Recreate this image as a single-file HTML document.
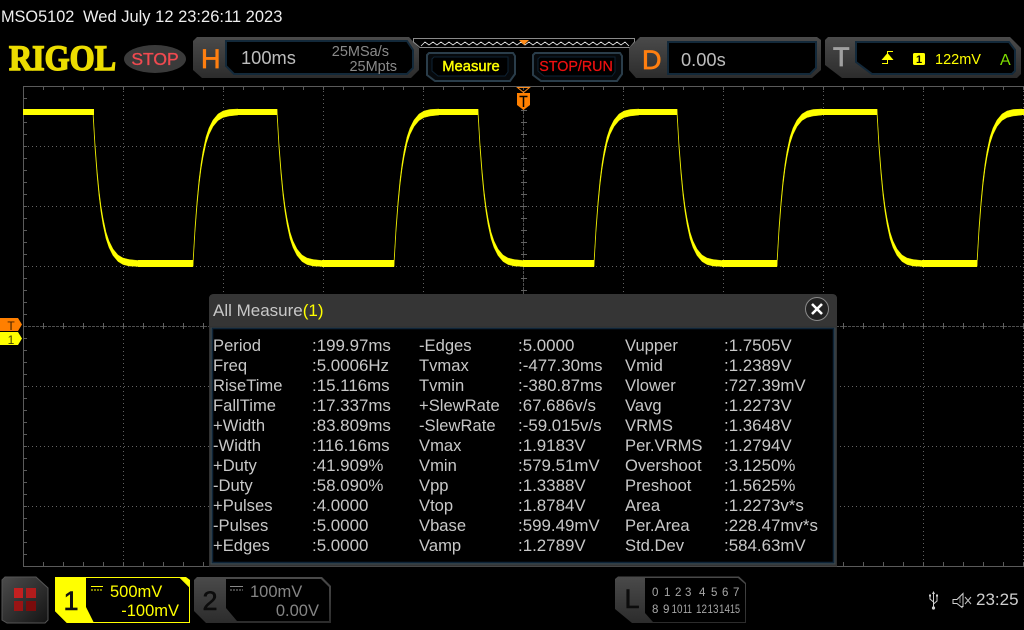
<!DOCTYPE html>
<html><head><meta charset="utf-8"><title>MSO5102</title>
<style>
html,body{margin:0;padding:0;background:#000;width:1024px;height:630px;overflow:hidden}
svg{display:block}
text{font-family:"Liberation Sans",sans-serif}
.m text{font-size:16.6px;fill:#c8c8c8}
.m text:nth-child(even){font-size:16.9px}
</style></head><body>
<svg width="1024" height="630" viewBox="0 0 1024 630" xmlns="http://www.w3.org/2000/svg">
<defs>
<path id="f" d="M0,-3L2,31L4,57L6,78L8,94L10,106L13,120L16,129L20,137L25,143L30,146L36,147.5L45,148.5L45,154.5L36,154L30,152.5L25,149.5L20,143.5L16,135.5L13,126.5L10,112.5L8,100L6,84L4,63L2,37L0,3Z" fill="#ff0" stroke="#ff0" stroke-width=".4"/>
<path id="r" d="M0,3L2,-31L4,-57L6,-78L8,-94L10,-106L13,-120L16,-129L20,-137L25,-143L30,-146L36,-147.5L45,-148.5L45,-154.5L36,-154L30,-152.5L25,-149.5L20,-143.5L16,-135.5L13,-126.5L10,-112.5L8,-100L6,-84L4,-63L2,-37L0,-3Z" fill="#ff0" stroke="#ff0" stroke-width=".4"/>
<linearGradient id="g" x1="0" y1="0" x2="0" y2="1"><stop offset="0" stop-color="#4a4a4a"/><stop offset="1" stop-color="#2c2c2c"/></linearGradient>
<linearGradient id="g2" x1="0" y1="0" x2="1" y2="1"><stop offset="0" stop-color="#4c4c4c"/><stop offset="1" stop-color="#141414"/></linearGradient>
</defs>
<rect width="1024" height="630" fill="#000"/>

<!-- graticule -->
<g fill="none">
<path d="M23.5,566V86.5H1024" stroke="#5a5a5a"/>
<path d="M23,566.5H1024" stroke="#5a5a5a"/>
<line x1="43" x2="1024" y1="88" y2="88" stroke="#5a5a5a" stroke-width="4" stroke-dasharray="1 19"/>
<line x1="43" x2="1024" y1="564" y2="564" stroke="#5a5a5a" stroke-width="4" stroke-dasharray="1 19"/>
<line x1="25" x2="25" y1="98" y2="566" stroke="#5a5a5a" stroke-width="4" stroke-dasharray="1 11"/>
<g stroke="#626262" stroke-dasharray="1 3">
<path d="M123.5,87V566M223.5,87V566M323.5,87V566M423.5,87V566M623.5,87V566M723.5,87V566M823.5,87V566M923.5,87V566M1023.5,87V566"/>
<path d="M24,146.5H1024M24,206.5H1024M24,266.5H1024M24,386.5H1024M24,446.5H1024M24,506.5H1024"/>
</g>
<line x1="24" x2="1024" y1="326.5" y2="326.5" stroke="#4e4e4e" stroke-dasharray="3 1"/>
<line x1="523.5" x2="523.5" y1="87" y2="566" stroke="#4e4e4e" stroke-dasharray="3 1"/>
<line x1="43" x2="1024" y1="326" y2="326" stroke="#626262" stroke-width="6" stroke-dasharray="1 19"/>
<line x1="524" x2="524" y1="98" y2="566" stroke="#626262" stroke-width="6" stroke-dasharray="1 11"/>
</g>

<!-- waveform -->
<g fill="#ff0">
<rect x="23" y="109" width="71" height="6"/>
<rect x="138" y="260" width="55" height="7"/>
<rect x="238" y="109" width="39" height="6"/>
<rect x="322" y="260" width="72" height="7"/>
<rect x="439" y="109" width="39" height="6"/>
<rect x="523" y="260" width="71" height="7"/>
<rect x="639" y="109" width="38" height="6"/>
<rect x="722" y="260" width="55" height="7"/>
<rect x="822" y="109" width="55" height="6"/>
<rect x="922" y="260" width="55" height="7"/>
<rect x="1022" y="109" width="2" height="6"/>
</g>
<use href="#f" x="93" y="112"/><use href="#r" x="193" y="263.5"/>
<use href="#f" x="277" y="112"/><use href="#r" x="394" y="263.5"/>
<use href="#f" x="478" y="112"/><use href="#r" x="594" y="263.5"/>
<use href="#f" x="677" y="112"/><use href="#r" x="777" y="263.5"/>
<use href="#f" x="877" y="112"/><use href="#r" x="977" y="263.5"/>

<!-- side markers -->
<path d="M0,318H18L22,324.5L18,331H0Z" fill="#ff7f00"/>
<path d="M0,332H18L22,338.5L18,345H0Z" fill="#ff0"/>
<text x="11" y="330" font-size="12" fill="#402000" text-anchor="middle">T</text>
<text x="11" y="344" font-size="12" fill="#404000" text-anchor="middle">1</text>

<!-- trigger position marker -->
<path d="M517.5,87.5H529.5L523.5,92.5Z" fill="none" stroke="#ff8c1a"/>
<path d="M517,93H530V105L523.5,110L517,105Z" fill="#ff8000"/>
<path d="M519.5,96.5H527.5M523.5,96.5V107" stroke="#000" stroke-width="1.5" fill="none"/>

<!-- top text -->
<text x="1" y="22" font-size="16.3" fill="#eee">MSO5102</text>
<text x="83" y="22" font-size="16.5" fill="#eee">Wed July 12 23:26:11 2023</text>
<text x="9" y="70" font-size="36" font-weight="bold" fill="#ecdc00" stroke="#ecdc00" stroke-width="1.5" textLength="107" lengthAdjust="spacingAndGlyphs" style="font-family:'Liberation Serif',serif">RIGOL</text>
<ellipse cx="155" cy="59" rx="31" ry="14" fill="#3a3a3a"/>
<text x="155" y="65" font-size="17.5" fill="#f04a50" stroke="#f04a50" stroke-width=".35" text-anchor="middle">STOP</text>

<!-- H -->
<path d="M197,37H409L419,48V70L411,78H202L193,70V41Z" fill="url(#g)"/>
<path d="M226,41H407L413,50V68L407,74H234L226,66Z" fill="#000" stroke="#13293a" stroke-width="2"/>
<text x="201" y="68" font-size="27" fill="#ff7f10" stroke="#ff7f10" stroke-width=".7">H</text>
<text x="241" y="64" font-size="18.3" fill="#bdbdbd">100ms</text>
<text x="389" y="56" font-size="14.5" fill="#8a8a8a" text-anchor="end">25MSa/s</text>
<text x="397" y="71" font-size="14.5" fill="#8a8a8a" text-anchor="end">25Mpts</text>

<!-- memory strip -->
<path d="M413.5,38.5H634.5V42L630,47.5H420L413.5,42Z" fill="none" stroke="#8a8a8a"/>
<path d="M421,46L425,42L429,45L433,42L437,45L441,42L445,45L449,42L453,45L457,42L461,45L465,42L469,45L473,42L477,45L481,42L485,45L489,42L493,45L497,42L501,45L505,42L509,45L513,42L517,45L521,42L525,45L529,42L533,45L537,42L541,45L545,42L549,45L553,42L557,45L561,42L565,45L569,42L573,45L577,42L581,45L585,42L589,45L593,42L597,45L601,42L605,45L609,42L613,45L617,42L621,45L625,42L629,46" fill="none" stroke="#eee" stroke-width=".8"/>
<path d="M519,40H529L524,45Z" fill="#ff8c1a"/>

<!-- buttons -->
<path d="M429,53H513L515,56V74L510,81H435L427,75V55Z" fill="#06090c" stroke="#2a3d4a" stroke-width="2"/>
<path d="M434,57H508V72L505,76H438L432,71V59Z" fill="#000" stroke="#0e2233"/>
<text x="471" y="71" font-size="14.8" fill="#ff0" stroke="#ff0" stroke-width=".4" text-anchor="middle">Measure</text>
<path d="M535,53H620L622,56V74L617,81H541L533,75V55Z" fill="#06090c" stroke="#2a3d4a" stroke-width="2"/>
<path d="M540,57H615V72L612,76H544L538,71V59Z" fill="#000" stroke="#0e2233"/>
<text x="576" y="71" font-size="14.3" fill="#f01010" stroke="#f01010" stroke-width=".25" text-anchor="middle">STOP/RUN</text>

<!-- D -->
<path d="M640,37H817L821,40V70L812,78H636L629,70V48Z" fill="url(#g)"/>
<path d="M668,42H816V68L810,74H668Z" fill="#000" stroke="#13293a" stroke-width="2"/>
<text x="642" y="69" font-size="27" fill="#ff7f10" stroke="#ff7f10" stroke-width=".7">D</text>
<text x="681" y="66" font-size="18.3" fill="#bdbdbd">0.00s</text>

<!-- T -->
<path d="M828,37H1010L1021,48V74L1017,78H842L825,65V40Z" fill="url(#g)"/>
<path d="M856,42H1009L1015,50V71L1012,74H872L856,62Z" fill="#000" stroke="#13293a" stroke-width="2"/>
<text x="833" y="66" font-size="27" fill="#a0a0a0" stroke="#a0a0a0" stroke-width=".8">T</text>
<path d="M882,63.5H887.5V51.5H893" fill="none" stroke="#ff0" stroke-width="1"/>
<path d="M887.5,53L893.5,60H881.5Z" fill="#ff0"/>
<rect x="913" y="53" width="12" height="12" rx="1.5" fill="#ff0"/>
<text x="919" y="63" font-size="11" font-weight="bold" fill="#000" text-anchor="middle">1</text>
<text x="935" y="64" font-size="14.5" fill="#ff0">122mV</text>
<text x="1000" y="65" font-size="16" fill="#80e000">A</text>

<!-- All Measure dialog -->
<path d="M209,299Q209,294 214,294H832Q837,294 837,299V566.5H209Z" fill="#323232"/>
<path d="M209,299Q209,294 214,294H832Q837,294 837,299V326H209Z" fill="#353535"/>
<rect x="210.5" y="327.5" width="625" height="237" fill="#3a474c"/>
<rect x="212.5" y="328.5" width="621" height="234" fill="#000" stroke="#0e2438" stroke-width="1.5"/>
<text x="213" y="316" font-size="17" fill="#c8c8c8">All Measure<tspan fill="#ff0">(1)</tspan></text>
<circle cx="817" cy="309" r="11.5" fill="#222" stroke="#8a8a8a"/>
<path d="M812,304L822,314M822,304L812,314" stroke="#fff" stroke-width="2.6" fill="none"/>
<g class="m">
<text x="213" y="351">Period</text><text x="312" y="351">:199.97ms</text>
<text x="213" y="371">Freq</text><text x="312" y="371">:5.0006Hz</text>
<text x="213" y="391">RiseTime</text><text x="312" y="391">:15.116ms</text>
<text x="213" y="411">FallTime</text><text x="312" y="411">:17.337ms</text>
<text x="213" y="431">+Width</text><text x="312" y="431">:83.809ms</text>
<text x="213" y="451">-Width</text><text x="312" y="451">:116.16ms</text>
<text x="213" y="471">+Duty</text><text x="312" y="471">:41.909%</text>
<text x="213" y="491">-Duty</text><text x="312" y="491">:58.090%</text>
<text x="213" y="511">+Pulses</text><text x="312" y="511">:4.0000</text>
<text x="213" y="531">-Pulses</text><text x="312" y="531">:5.0000</text>
<text x="213" y="551">+Edges</text><text x="312" y="551">:5.0000</text>

<text x="419" y="351">-Edges</text><text x="518" y="351">:5.0000</text>
<text x="419" y="371">Tvmax</text><text x="518" y="371">:-477.30ms</text>
<text x="419" y="391">Tvmin</text><text x="518" y="391">:-380.87ms</text>
<text x="419" y="411">+SlewRate</text><text x="518" y="411">:67.686v/s</text>
<text x="419" y="431">-SlewRate</text><text x="518" y="431">:-59.015v/s</text>
<text x="419" y="451">Vmax</text><text x="518" y="451">:1.9183V</text>
<text x="419" y="471">Vmin</text><text x="518" y="471">:579.51mV</text>
<text x="419" y="491">Vpp</text><text x="518" y="491">:1.3388V</text>
<text x="419" y="511">Vtop</text><text x="518" y="511">:1.8784V</text>
<text x="419" y="531">Vbase</text><text x="518" y="531">:599.49mV</text>
<text x="419" y="551">Vamp</text><text x="518" y="551">:1.2789V</text>

<text x="625" y="351">Vupper</text><text x="724" y="351">:1.7505V</text>
<text x="625" y="371">Vmid</text><text x="724" y="371">:1.2389V</text>
<text x="625" y="391">Vlower</text><text x="724" y="391">:727.39mV</text>
<text x="625" y="411">Vavg</text><text x="724" y="411">:1.2273V</text>
<text x="625" y="431">VRMS</text><text x="724" y="431">:1.3648V</text>
<text x="625" y="451">Per.VRMS</text><text x="724" y="451">:1.2794V</text>
<text x="625" y="471">Overshoot</text><text x="724" y="471">:3.1250%</text>
<text x="625" y="491">Preshoot</text><text x="724" y="491">:1.5625%</text>
<text x="625" y="511">Area</text><text x="724" y="511">:1.2273v*s</text>
<text x="625" y="531">Per.Area</text><text x="724" y="531">:228.47mv*s</text>
<text x="625" y="551">Std.Dev</text><text x="724" y="551">:584.63mV</text>
</g>

<!-- bottom: menu -->
<path d="M5,577H36L48,588V620L45,623H7L2,620V580Z" fill="url(#g2)" stroke="#555"/>
<rect x="14" y="588" width="9" height="10" fill="#c42020"/>
<rect x="26" y="588" width="10" height="10" fill="#b01c1c"/>
<rect x="14" y="601" width="9" height="10" fill="#9a1414"/>
<rect x="26" y="601" width="10" height="10" fill="#7a0c0c"/>

<!-- CH1 -->
<path d="M55.5,577.5H180L189.5,587V622.5H67L55.5,611Z" fill="#000" stroke="#ff0"/>
<path d="M55,577H86V607L94,623H67L55,611Z" fill="#ff0"/>
<path d="M180,577L190,587V580L186,577Z" fill="#ff0"/>
<text x="71" y="610" font-size="27" text-anchor="middle" fill="#111" stroke="#111" stroke-width=".6">1</text>
<path d="M91,586.5H103" stroke="#ff0" fill="none"/>
<path d="M91,590H103" stroke="#ff0" stroke-dasharray="2 1" fill="none"/>
<text x="110" y="597" font-size="16.5" fill="#ff0">500mV</text>
<text x="179" y="616" font-size="16.5" fill="#ff0" text-anchor="end">-100mV</text>

<!-- CH2 -->
<path d="M197,577H322L331,586V623H206L194,611V580Z" fill="url(#g)"/>
<path d="M226,579H321L329,587V621H237L226,608Z" fill="#000"/>
<text x="210" y="610" font-size="27" text-anchor="middle" fill="#0c0c0c" stroke="#0c0c0c" stroke-width=".6">2</text>
<path d="M230,586.5H243" stroke="#888" fill="none"/>
<path d="M230,590H243" stroke="#888" stroke-dasharray="2 1" fill="none"/>
<text x="250" y="597" font-size="16.5" fill="#858585">100mV</text>
<text x="319" y="616" font-size="16.5" fill="#858585" text-anchor="end">0.00V</text>

<!-- L -->
<path d="M618,576.5H739L746,583V623H632L615,609V579Z" fill="url(#g)"/>
<path d="M645,578H738L745,584V622H653L645,613Z" fill="#000"/>
<text x="632" y="608" font-size="27" text-anchor="middle" fill="#0c0c0c" stroke="#0c0c0c" stroke-width=".6">L</text>
<g font-size="11.5" fill="#a8a8a8">
<text x="652" y="596">0</text><text x="664" y="596">1</text><text x="675" y="596">2</text><text x="685" y="596">3</text>
<text x="699" y="596">4</text><text x="711" y="596">5</text><text x="722" y="596">6</text><text x="733" y="596">7</text>
<text x="652" y="613">8</text><text x="663" y="613">9</text>
<text x="671.5" y="613" textLength="11" lengthAdjust="spacingAndGlyphs">10</text><text x="683" y="613" textLength="9" lengthAdjust="spacingAndGlyphs">11</text>
<text x="696" y="613" textLength="11" lengthAdjust="spacingAndGlyphs">12</text><text x="707.5" y="613" textLength="11" lengthAdjust="spacingAndGlyphs">13</text>
<text x="719" y="613" textLength="11" lengthAdjust="spacingAndGlyphs">14</text><text x="730" y="613" textLength="10" lengthAdjust="spacingAndGlyphs">15</text>
</g>

<!-- status -->
<path d="M933.5,593V607M933.5,602L930,599V596M933.5,604L937,601V596" fill="none" stroke="#cfcfcf"/>
<circle cx="933.5" cy="608" r="1.6" fill="#cfcfcf"/>
<path d="M933.5,591L932,594H935Z" fill="#cfcfcf"/>
<rect x="929" y="594.5" width="2" height="2" fill="#cfcfcf"/><rect x="936" y="594.5" width="2" height="2" fill="#cfcfcf"/>
<path d="M953,599.5H957L963,593.5V606.5H962V607.5L957,603.5H953Z" fill="none" stroke="#d0d0d0"/>
<path d="M960,597V603" stroke="#888" fill="none"/>
<path d="M965,597L971,604M971,597L965,604" stroke="#c0c0c0" fill="none"/>
<text x="976" y="605" font-size="17" fill="#cfcfcf">23:25</text>
</svg>
</body></html>
